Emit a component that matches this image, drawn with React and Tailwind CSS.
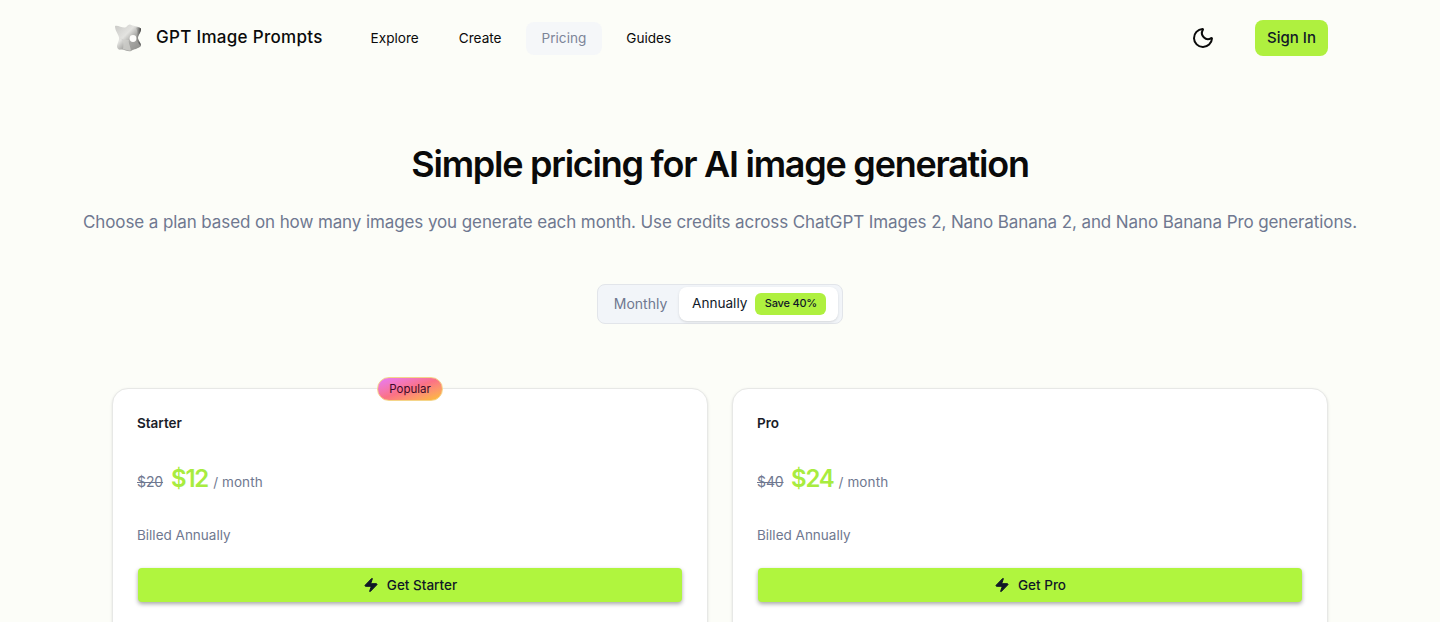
import React from "react";
import { Moon, Zap } from "lucide-react";

function Logo() {
  return (
    <svg width="32" height="32" viewBox="4 4 32 32" className="shrink-0">
      <defs>
        <linearGradient id="lg" x1="0" y1="0" x2="1" y2="1">
          <stop offset="0" stopColor="#c9c9c6" />
          <stop offset="0.4" stopColor="#e3e3e0" />
          <stop offset="0.6" stopColor="#a9a9a6" />
          <stop offset="1" stopColor="#8b8b88" />
        </linearGradient>
        <linearGradient id="ld" x1="0" y1="0" x2="1" y2="0">
          <stop offset="0" stopColor="#8a8a88" stopOpacity="0" />
          <stop offset="1" stopColor="#3f3f3e" />
        </linearGradient>
      </defs>
      <path d="M7 8 C10 7 14 10 17 9.5 C19 9 20 6 22 6.5 C25 8 30 8 33 10.5 C33.5 14 30 17 30 20 C30 23 33.5 25 33 28 C30 31 26 31 23 33 C20 34 16 31 13 31.5 C11 32 9.5 31 9 29 C9 25 11.5 23 11 19.5 C10.5 16 7 13 7 8 Z" fill="url(#lg)" />
      <path d="M12 20 C15 22 16 25 15 31 C18 32 21 33 23 32.5 C22 27 20 24 21 22 C17 22 14 21 12 20 Z" fill="#cfcfcc" opacity="0.8" />
      <path d="M27 10 C30 12 30 16 28 20 C29 24 31 26 32.5 27.5 C33.5 25 30 23 30 20 C30 17 33.5 14 33 10.5 C31 9 29 9 27 10 Z" fill="url(#ld)" />
      <circle cx="25" cy="20.5" r="3.4" fill="#fdfdfb" />
    </svg>
  );
}

function Card({ name, old, price, cta, popular }) {
  return (
    <div className="relative flex-1 rounded-2xl border border-[#e7e8e6] bg-white px-6 pt-6 pb-6 shadow-sm">
      {popular && (
        <span className="absolute -top-3 right-[264px] flex h-6 w-[66px] items-center justify-center rounded-full border border-[#f5d58a] bg-gradient-to-br from-[#e879f9] via-[#fb7185] to-[#fbbf24] pt-px text-[11.5px] text-[#3b0a2a]">
          Popular
        </span>
      )}
      <h3 className="text-[13.5px] leading-5 font-semibold text-[#1a1d29]">{name}</h3>
      <div className="mt-[30px] flex h-9 items-center">
        <span className="mt-[2px] w-[25px] text-sm tracking-[-0.1px] text-[#6f7890] line-through">{old}</span>
        <span className="mb-[5px] ml-[9px] text-[24px] font-semibold tracking-[-1.2px] text-[#a8ec3f]">{price}</span>
        <span className="mt-[2px] ml-[5px] text-[13.5px] tracking-[0.1px] text-[#6f7890]">/ month</span>
      </div>
      <p className="mt-[26px] text-[13.5px] leading-5 text-[#6f7890]">Billed Annually</p>
      <button className="mx-px mt-[23px] flex h-[34px] w-[544px] items-center justify-center gap-2 rounded bg-[#b0f53e] text-[13.5px] font-medium text-[#111827] shadow-[0_2px_4px_rgba(0,0,0,0.35)]">
        <Zap size={16} fill="#111827" strokeWidth={1.5} />
        {cta}
      </button>
      <div className="h-40" />
    </div>
  );
}

export default function App() {
  return (
    <div className="h-[622px] overflow-hidden bg-[#fcfdf8] font-['Inter',sans-serif] text-[#0a0a0a]">
      <header className="mx-auto flex h-[76px] w-[1216px] items-center">
        <Logo />
        <span className="ml-[12px] text-[17px] font-medium tracking-[0.3px]">GPT Image Prompts</span>
        <nav className="ml-8 flex items-center gap-2 text-[13.6px]">
          <a className="flex h-[33px] items-center px-4">Explore</a>
          <a className="flex h-[33px] items-center px-4">Create</a>
          <a className="flex h-[33px] items-center rounded-lg bg-[#f5f7f9] px-4 text-[#7c8598]">Pricing</a>
          <a className="flex h-[33px] items-center px-4">Guides</a>
        </nav>
        <div className="ml-auto flex items-center">
          <Moon size={24} strokeWidth={2} className="mr-[40px]" />
          <button className="flex h-9 w-[73px] items-center justify-center rounded-lg bg-[#aff03f] text-[15px] font-medium text-[#111827]">Sign In</button>
        </div>
      </header>

      <main className="mx-auto w-[1216px]">
        <h1 className="mt-[65px] text-center text-[36px] leading-[46px] font-semibold tracking-[-1.25px] text-[#0a0a0a]">Simple pricing for AI image generation</h1>
        <p className="-mx-8 mt-[23px] text-center text-[17px] leading-6 tracking-[-0.1px] whitespace-nowrap text-[#6f7890]">Choose a plan based on how many images you generate each month. Use credits across ChatGPT Images 2, Nano Banana 2, and Nano Banana Pro generations.</p>

        <div className="mt-[50px] flex justify-center">
          <div className="flex h-10 w-[246px] items-center rounded-lg border border-[#e2e5ea] bg-[#f2f5f9] pl-[3px] text-sm">
            <span className="w-[78px] pl-[1px] text-center text-[#6f7890]">Monthly</span>
            <div className="flex h-[34px] w-[159px] items-center rounded-lg bg-white pl-[13px] shadow-sm">
              <span className="text-[13.6px] text-[#111827]">Annually</span>
              <span className="ml-2 flex h-[22px] w-[71px] items-center justify-center rounded-md bg-[#aff03f] text-[11px] font-medium tracking-[-0.2px] text-[#111827]">Save 40%</span>
            </div>
          </div>
        </div>

        <div className="mt-[64px] flex gap-6">
          <Card name="Starter" old="$20" price="$12" cta="Get Starter" popular />
          <Card name="Pro" old="$40" price="$24" cta="Get Pro" />
        </div>
      </main>
    </div>
  );
}
